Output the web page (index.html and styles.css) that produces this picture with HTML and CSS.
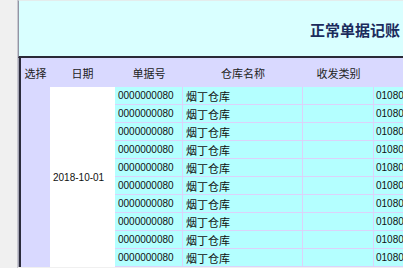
FILE: index.html
```html
<!DOCTYPE html>
<html lang="zh">
<head>
<meta charset="utf-8">
<link rel="stylesheet" href="styles.css">
</head>
<body>
<div class="page">
  <div class="frame">
    <div class="band"><h1 class="title">正常单据记账</h1></div>
    <div class="sheet">
      <div class="hd">选择</div>
      <div class="hd">日期</div>
      <div class="hd">单据号</div>
      <div class="hd">仓库名称</div>
      <div class="hd">收发类别</div>
      <div class="hd"></div>
      <div class="sel"></div>
      <div class="date">2018-10-01</div>
      <div class="cell num">0000000080</div><div class="cell cj">烟丁仓库</div><div class="cell"></div><div class="cell num code">01080</div>
      <div class="cell num">0000000080</div><div class="cell cj">烟丁仓库</div><div class="cell"></div><div class="cell num code">01080</div>
      <div class="cell num">0000000080</div><div class="cell cj">烟丁仓库</div><div class="cell"></div><div class="cell num code">01080</div>
      <div class="cell num">0000000080</div><div class="cell cj">烟丁仓库</div><div class="cell"></div><div class="cell num code">01080</div>
      <div class="cell num">0000000080</div><div class="cell cj">烟丁仓库</div><div class="cell"></div><div class="cell num code">01080</div>
      <div class="cell num">0000000080</div><div class="cell cj">烟丁仓库</div><div class="cell"></div><div class="cell num code">01080</div>
      <div class="cell num">0000000080</div><div class="cell cj">烟丁仓库</div><div class="cell"></div><div class="cell num code">01080</div>
      <div class="cell num">0000000080</div><div class="cell cj">烟丁仓库</div><div class="cell"></div><div class="cell num code">01080</div>
      <div class="cell num">0000000080</div><div class="cell cj">烟丁仓库</div><div class="cell"></div><div class="cell num code">01080</div>
      <div class="cell num">0000000080</div><div class="cell cj">烟丁仓库</div><div class="cell"></div><div class="cell num code">01080</div>
    </div>
  </div>
</div>
</body>
</html>
```

FILE: styles.css
```css
html, body {
  margin: 0;
  padding: 0;
  width: 403px;
  height: 268px;
  overflow: hidden;
  background: #f0f0f0;
}
.page {
  display: flex;
  padding-left: 17px;
  height: 268px;
}
.frame {
  flex: none;
  width: 385px;
  height: 268px;
  overflow: hidden;
  border-left: 1px solid #c8c8d0;
}
.band {
  box-sizing: border-box;
  height: 58px;
  background: #d9ffff;
  border-top: 1px solid #e4ecec;
  border-left: 1px solid #9494a4;
  border-bottom: 2px solid #2a2a38;
  display: flex;
  align-items: center;
  padding-left: 291px;
  padding-top: 3px;
  white-space: nowrap;
  overflow: hidden;
}
.title {
  margin: 0;
  font-family: "Noto Sans CJK SC", sans-serif;
  font-weight: bold;
  font-size: 15px;
  line-height: 18px;
  color: #1b2b5c;
  flex: none;
}
.sheet {
  margin-left: 1px;
  border-left: 2px solid #2b2b3b;
  box-shadow: -1px 0 0 #a4a4b4;
  display: grid;
  grid-template-columns: 29px 65px 68px 120px 71px 90px;
  grid-template-rows: 29px repeat(10, 18px);
  background: #d9d9ff;
  width: max-content;
}
.hd {
  background: #d9d9ff;
  font-family: "Noto Sans CJK SC", sans-serif;
  font-size: 11px;
  color: #222;
  display: flex;
  align-items: center;
  justify-content: center;
  padding-top: 1px;
}
.sel {
  grid-column: 1;
  grid-row: 2 / span 10;
  background: #d9d9ff;
}
.date {
  grid-column: 2;
  grid-row: 2 / span 10;
  background: #ffffff;
  font-family: "Liberation Sans", sans-serif;
  font-size: 10px;
  color: #111;
  display: flex;
  align-items: center;
  padding-left: 3px;
  padding-top: 1px;
}
.cell {
  box-sizing: border-box;
  background: #b4ffff;
  border-right: 1px solid #dcd2fa;
  border-bottom: 1px solid #dcd2fa;
  display: flex;
  align-items: center;
  padding-left: 3px;
  white-space: nowrap;
  overflow: hidden;
  color: #111;
}
.num {
  font-family: "Liberation Sans", sans-serif;
  font-size: 10px;
}
.cj {
  font-family: "Noto Sans CJK SC", sans-serif;
  font-size: 11px;
}
.code {
  padding-left: 2px;
}
```
